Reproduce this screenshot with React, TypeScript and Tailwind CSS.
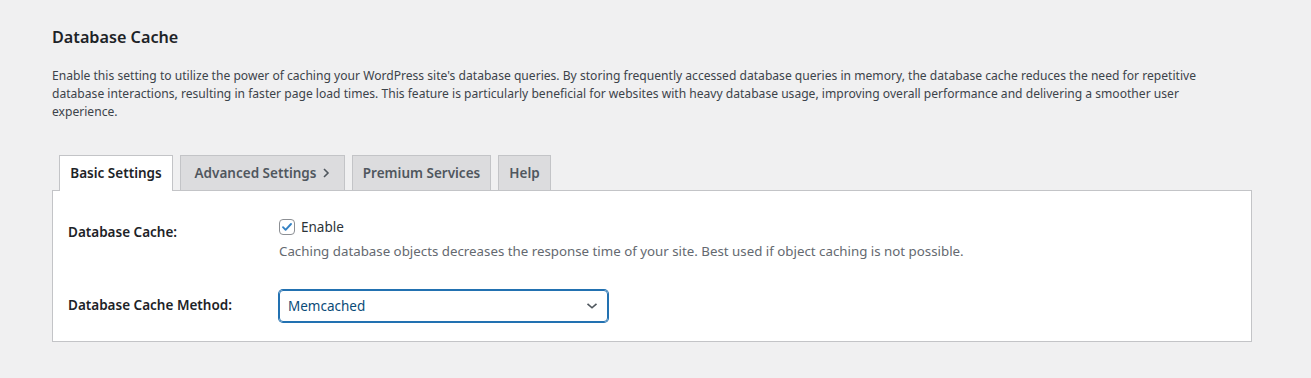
import React from "react";

const font = { fontFamily: '"Noto Sans", "Open Sans", sans-serif' };

export default function App() {
  return (
    <div
      className="min-h-[378px] w-full bg-[#f0f0f1] pl-[52px] pr-[60px] pt-[26px] text-[#3c434a]"
      style={font}
    >
      <h2 className="text-[16.2px] font-semibold leading-[22px] text-[#1d2327]">Database Cache</h2>
      <p className="mt-[19px] text-[12.1px] leading-[18px] text-[#3c434a] whitespace-nowrap">
        Enable this setting to utilize the power of caching your WordPress site's database queries. By storing frequently accessed database queries in memory, the database cache reduces the need for repetitive
        <br />
        database interactions, resulting in faster page load times. This feature is particularly beneficial for websites with heavy database usage, improving overall performance and delivering a smoother user
        <br />
        experience.
      </p>

      <div className="mt-[34px] w-[1200px]">
        <div className="flex gap-[7px] pl-[7px]">
          <div className="relative z-10 -mb-px flex h-[36px] w-[114px] items-center justify-center border border-b-0 border-[#c3c4c7] bg-white text-[13.5px] font-semibold text-[#1d2327]">
            Basic Settings
          </div>
          <div className="flex h-[35px] w-[165px] items-center justify-center gap-[6px] border border-b-0 border-[#c3c4c7] bg-[#dcdcde] text-[13.5px] font-semibold text-[#50575e]">
            Advanced Settings
            <svg width="8" height="12" viewBox="0 0 8 12" fill="none">
              <path d="M2 2l4 4-4 4" stroke="#50575e" strokeWidth="1.6" />
            </svg>
          </div>
          <div className="flex h-[35px] w-[139px] items-center justify-center border border-b-0 border-[#c3c4c7] bg-[#dcdcde] text-[13.5px] font-semibold text-[#50575e]">
            Premium Services
          </div>
          <div className="flex h-[35px] w-[53px] items-center justify-center border border-b-0 border-[#c3c4c7] bg-[#dcdcde] text-[13.5px] font-semibold text-[#50575e]">
            Help
          </div>
        </div>

        <div className="border border-[#c3c4c7] bg-white pb-[19px] pl-[15px] pt-[27px]">
          <div className="grid grid-cols-[211px_1fr]">
            <div className="mt-[5px] text-[13.5px] font-semibold leading-[18px] text-[#1d2327]">Database Cache:</div>
            <div>
              <div className="flex h-[18px] items-center">
                <span className="flex h-[16px] w-[16px] items-center justify-center rounded-[4px] border border-[#8c8f94] bg-white">
                  <svg width="12" height="12" viewBox="0 0 12 12" fill="none">
                    <path d="M2 6.2l2.6 2.6L10 3" stroke="#3582c4" strokeWidth="1.9" strokeLinecap="round" strokeLinejoin="round" />
                  </svg>
                </span>
                <span className="ml-[6px] text-[13.5px] text-[#2c3338]">Enable</span>
              </div>
              <p className="mt-[6px] text-[13.3px] leading-[18px] text-[#646970] whitespace-nowrap">
                Caching database objects decreases the response time of your site. Best used if object caching is not possible.
              </p>
            </div>
          </div>

          <div className="mt-[30px] grid grid-cols-[211px_1fr]">
            <div className="mt-[6px] text-[13.5px] font-semibold leading-[18px] text-[#1d2327]">Database Cache Method:</div>
            <div>
              <div className="flex h-[32px] w-[329px] items-center justify-between rounded-[4px] border border-[#2271b1] pl-[8px] pr-[9px] shadow-[0_0_0_1px_#2271b1]">
                <span className="text-[13.5px] text-[#0a4b78]">Memcached</span>
                <svg width="12" height="8" viewBox="0 0 12 8" fill="none">
                  <path d="M1.5 1.8l4.5 4 4.5-4" stroke="#50575e" strokeWidth="1.6" />
                </svg>
              </div>
            </div>
          </div>
        </div>
      </div>
    </div>
  );
}
